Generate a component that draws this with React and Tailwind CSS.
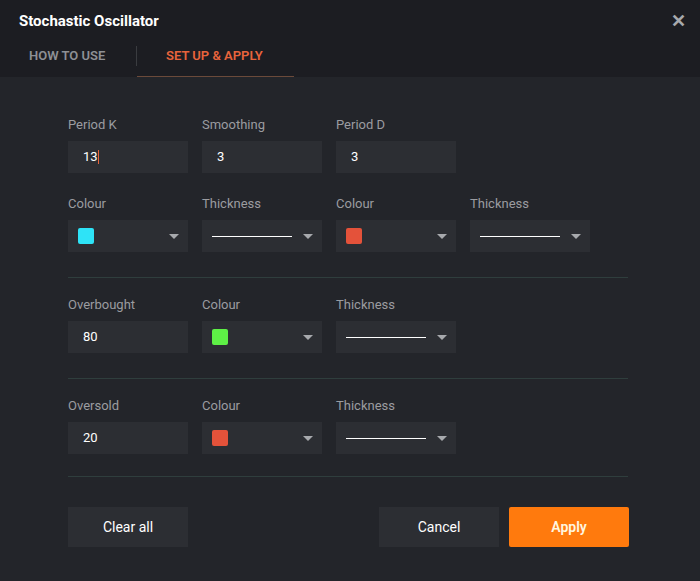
import React from "react";

function Caret() {
    return <span className="w-0 h-0 border-l-[5px] border-r-[5px] border-t-[5px] border-l-transparent border-r-transparent border-t-[#a7a9ad]" />;
}

function TextBox({label, value, cursor}) {
    return (
        <div className="w-[120px] flex flex-col">
            <div className="text-[13px] text-[#9b9ca0] h-[20px] leading-[20px] mb-[6px]">{label}</div>
            <div className="h-[32px] bg-[#2c2e33] flex items-center pl-[15px] text-[13px] text-white">
                {value}
                {cursor && <span className="w-px h-[14px] bg-[#e8643c]" />}
            </div>
        </div>
    );
}

function ColourBox({label, colour}) {
    return (
        <div className="w-[120px] flex flex-col">
            <div className="text-[13px] text-[#9b9ca0] h-[20px] leading-[20px] mb-[6px]">{label}</div>
            <div className="h-[32px] bg-[#2c2e33] flex items-center justify-between pl-[10px] pr-[9px]">
                <span className="w-[16px] h-[16px] rounded-[2px]" style={{backgroundColor: colour}} />
                <Caret />
            </div>
        </div>
    );
}

function ThickBox({label}) {
    return (
        <div className="w-[120px] flex flex-col">
            <div className="text-[13px] text-[#9b9ca0] h-[20px] leading-[20px] mb-[6px]">{label}</div>
            <div className="h-[32px] bg-[#2c2e33] flex items-center justify-between pl-[10px] pr-[9px]">
                <span className="w-[80px] h-px bg-white" />
                <Caret />
            </div>
        </div>
    );
}

export default function App() {
    return (
        <div className="w-[700px] h-[581px] bg-[#23252a] flex flex-col" style={{fontFamily: "Roboto, 'Liberation Sans', sans-serif"}}>
            <div className="bg-[#1c1d22] h-[77px] flex flex-col">
                <div className="flex items-center justify-between h-[42px] pl-[19px] pr-[14px]">
                    <span className="text-white font-bold text-[15px]">Stochastic Oscillator</span>
                    <span className="text-[#a7a9ad] text-[18px] font-bold leading-none">✕</span>
                </div>
                <div className="flex items-stretch h-[35px]">
                    <div className="w-[136px] flex items-center pl-[29px] pb-[7px] text-[13px] font-semibold text-[#8e9095]">HOW TO USE</div>
                    <div className="w-px h-[20px] bg-[#3a3c40] mt-[4px]" />
                    <div className="w-[157px] flex items-center pl-[29px] pb-[6px] text-[13px] font-semibold text-[#e8643c] border-b border-[#6b4a3a]">SET UP &amp; APPLY</div>
                </div>
            </div>

            <div className="px-[68px] pt-[38px] flex flex-col">
                <div className="flex gap-[14px]">
                    <TextBox label="Period K" value="13" cursor />
                    <TextBox label="Smoothing" value="3" />
                    <TextBox label="Period D" value="3" />
                </div>
                <div className="flex gap-[14px] mt-[21px]">
                    <ColourBox label="Colour" colour="#2ee3f7" />
                    <ThickBox label="Thickness" />
                    <ColourBox label="Colour" colour="#e4523a" />
                    <ThickBox label="Thickness" />
                </div>
                <div className="h-px bg-[#2f3e3d] mt-[25px] w-[560px]" />

                <div className="flex gap-[14px] mt-[17px]">
                    <TextBox label="Overbought" value="80" />
                    <ColourBox label="Colour" colour="#5ef046" />
                    <ThickBox label="Thickness" />
                </div>
                <div className="h-px bg-[#2f3e3d] mt-[25px] w-[560px]" />

                <div className="flex gap-[14px] mt-[17px]">
                    <TextBox label="Oversold" value="20" />
                    <ColourBox label="Colour" colour="#e4523a" />
                    <ThickBox label="Thickness" />
                </div>
                <div className="h-px bg-[#2f3e3d] mt-[22px] w-[560px]" />

                <div className="flex justify-between mt-[30px] w-[561px]">
                    <button className="w-[120px] h-[40px] bg-[#2c2e33] text-white text-[14px]">Clear all</button>
                    <div className="flex gap-[10px]">
                        <button className="w-[120px] h-[40px] bg-[#2c2e33] text-white text-[14px]">Cancel</button>
                        <button className="w-[120px] h-[40px] bg-[#ff7a0d] text-[#fff6e0] text-[14px] font-semibold rounded-[2px]">Apply</button>
                    </div>
                </div>
            </div>
        </div>
    );
}
